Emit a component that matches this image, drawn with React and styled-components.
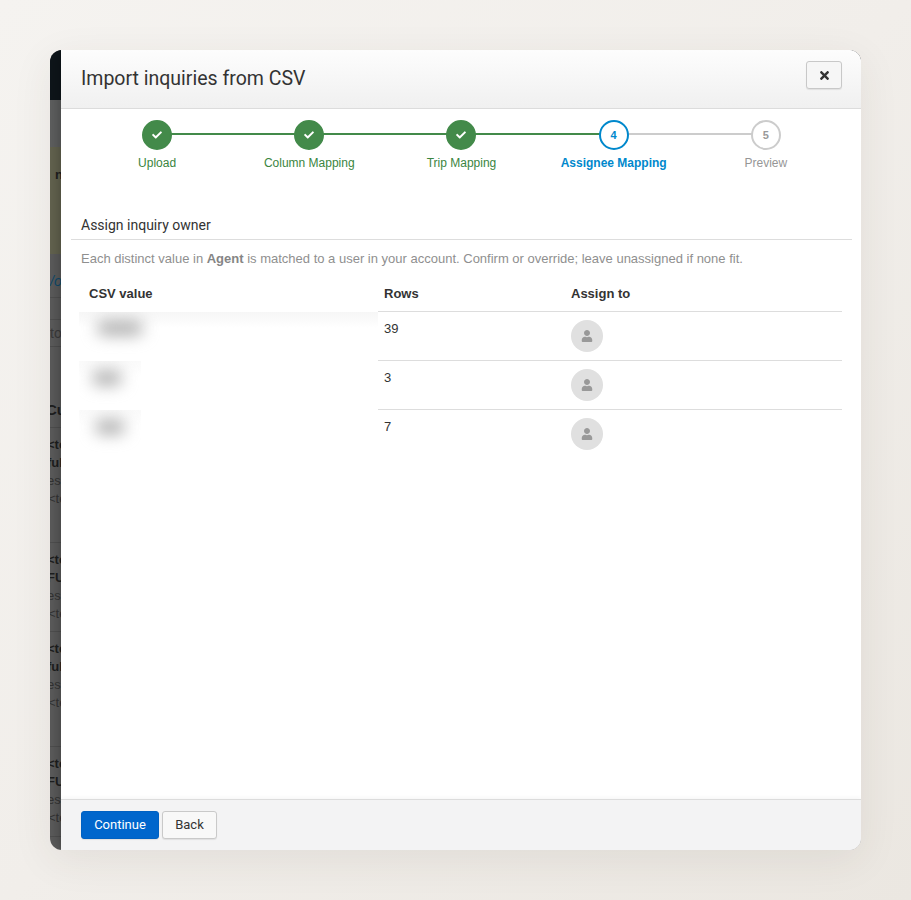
import React from "react";
import styled, { createGlobalStyle } from "styled-components";
import { FaCheck, FaTimes, FaUser } from "react-icons/fa";

const Global = createGlobalStyle`
  html, body { margin: 0; padding: 0; height: 100%; }
  body {
    width: 911px; height: 900px; overflow: hidden;
    background: linear-gradient(135deg, #f5f3f0 0%, #f1eeea 50%, #ebe7e1 100%);
    font-family: "Liberation Sans", Arial, sans-serif;
  }
`;

const Stage = styled.div`
  padding: 50px;
`;

const Window = styled.div`
  position: relative;
  width: 811px;
  height: 800px;
  border-radius: 12px;
  overflow: hidden;
  box-shadow: 0 10px 40px rgba(60, 50, 40, 0.08);
`;

const BackApp = styled.div`
  height: 100%;
  background: #5b5b5b;
  display: flex;
  flex-direction: column;
  font-size: 13px;
  line-height: 18px;
  color: #1e1e1e;
  white-space: nowrap;
`;

const NavBar = styled.div`
  height: 50px;
  background: #0e151a;
`;
const SubBar = styled.div`
  height: 47px;
  background: #5e5f5f;
`;
const Banner = styled.div`
  height: 107px;
  background: #63634f;
  padding: 19px 0 0 5px;
  box-sizing: border-box;
  font-weight: 700;
`;
const Tabs = styled.div`
  height: 44px;
  box-sizing: border-box;
  padding-top: 18px;
  border-bottom: 1px solid #505050;
  color: #0f4a6b;
  font-style: italic;
  font-size: 14px;
`;
const Search = styled.div`
  height: 28px;
  box-sizing: border-box;
  margin-top: 21px;
  border-top: 1px solid #505050;
  border-bottom: 1px solid #4e4e4e;
  color: #3a3a3a;
  font-size: 14px;
  line-height: 26px;
`;
const Heading = styled.div`
  margin-top: 54px;
  height: 26px;
  font-weight: 700;
  font-size: 15px;
  margin-left: -4px;
`;
const Card = styled.div`
  height: ${(p) => p.$h}px;
  box-sizing: border-box;
  padding-top: 8px;
  border-top: 1px solid #4f4f4f;
`;
const CardTag = styled.div`
  font-weight: 700;
  margin-left: -3px;
`;
const CardName = styled.div`
  font-weight: 700;
  margin-left: -3px;
`;
const CardMeta = styled.div`
  color: #333;
  margin-left: -3px;
`;
const CardFoot = styled.div`
  color: #333;
  margin-left: -2px;
`;

const Modal = styled.div`
  position: absolute;
  top: 0;
  left: 11px;
  right: 0;
  bottom: 0;
  display: flex;
  flex-direction: column;
  background: #fff;
  box-shadow: 0 0 14px rgba(0, 0, 0, 0.35);
`;

const Header = styled.div`
  height: 59px;
  box-sizing: border-box;
  flex: none;
  display: flex;
  align-items: center;
  justify-content: space-between;
  padding: 0 19px 0 20px;
  background: linear-gradient(#fdfdfd, #f0f0f0);
  border-bottom: 1px solid #dcdcdc;
`;
const Title = styled.h1`
  margin: 0;
  font: 400 19.5px/28px Roboto, sans-serif;
  color: #333;
`;
const CloseButton = styled.button`
  align-self: flex-start;
  width: 36px;
  height: 28px;
  margin-top: 11px;
  padding: 0;
  display: flex;
  align-items: center;
  justify-content: center;
  background: #f6f6f6;
  border: 1px solid #c8c8c8;
  border-radius: 3px;
  color: #333;
  font-size: 13px;
  box-shadow: 0 1px 1px rgba(0, 0, 0, 0.08);
`;

const Body = styled.div`
  flex: 1;
  min-height: 0;
  padding: 11px 9px 0 10px;
`;

const Stepper = styled.div`
  display: grid;
  grid-template-columns: repeat(5, 152.2px);
  padding: 0 0 0 10px;
  margin-bottom: 45px;
`;
const Step = styled.div`
  position: relative;
  display: flex;
  flex-direction: column;
  align-items: center;
  font-size: 12px;
  line-height: 14px;
  color: ${(p) => p.$color};
  font-weight: ${(p) => (p.$active ? 700 : 400)};
`;
const Connector = styled.span`
  position: absolute;
  top: 13px;
  left: 50%;
  width: 100%;
  height: 2px;
  background: ${(p) => p.$color};
`;
const Circle = styled.span`
  position: relative;
  z-index: 1;
  width: 30px;
  height: 30px;
  box-sizing: border-box;
  border-radius: 50%;
  display: flex;
  align-items: center;
  justify-content: center;
  margin-bottom: 6px;
  background: ${(p) => (p.$done ? "#438a4a" : "#fff")};
  border: 2px solid ${(p) => p.$color};
  color: ${(p) => (p.$done ? "#fff" : p.$color === "#ccc" ? "#999" : p.$color)};
  font-size: 11px;
  font-weight: 700;
`;

const SectionTitle = styled.h2`
  margin: 0;
  padding: 0 0 4px 10px;
  font: 400 14px/20px Roboto, sans-serif;
  color: #333;
  border-bottom: 1px solid #ddd;
`;
const Description = styled.p`
  margin: 11px 0 0 10px;
  font-size: 13px;
  line-height: 16px;
  color: #8f8f8f;
  b { color: #858585; }
`;

const Table = styled.div`
  margin: 17px 0 0 8px;
  width: 763px;
  display: grid;
  grid-template-columns: 299px 187px 277px;
  font-size: 13px;
  color: #333;
`;
const HeadCell = styled.div`
  height: 28px;
  padding-left: ${(p) => p.$pad}px;
  font-weight: 700;
  line-height: 18px;
  padding-top: 1px;
  box-sizing: border-box;
  border-bottom: ${(p) => (p.$plain ? "0" : "1px solid #ddd")};
`;
const HiddenCell = styled.div`
  height: 49px;
  overflow: hidden;
  background: linear-gradient(${(p) => (p.$first ? "#f6f6f6" : "#fafafa")}, #fff 16px);
  width: ${(p) => p.$cover}px;
`;
const Smudge = styled.div`
  width: ${(p) => p.$w}px;
  height: 14px;
  margin: ${(p) => p.$y}px 0 0 ${(p) => p.$x}px;
  background: #aaa;
  border-radius: 7px;
  filter: blur(8px);
`;
const CountCell = styled.div`
  height: 49px;
  box-sizing: border-box;
  padding: 9px 0 0 6px;
  line-height: 16px;
  border-bottom: ${(p) => (p.$last ? "0" : "1px solid #ddd")};
`;
const AssignCell = styled.div`
  height: 49px;
  box-sizing: border-box;
  padding: 8px 0 0 6px;
  border-bottom: ${(p) => (p.$last ? "0" : "1px solid #ddd")};
`;
const Avatar = styled.span`
  width: 32px;
  height: 32px;
  border-radius: 50%;
  background: #e0e0e0;
  color: #999;
  font-size: 12px;
  display: flex;
  align-items: center;
  justify-content: center;
`;

const Footer = styled.div`
  height: 51px;
  flex: none;
  box-sizing: border-box;
  display: flex;
  align-items: flex-start;
  gap: 3px;
  padding: 11px 20px 0;
  background: #f3f3f4;
  border-top: 1px solid #dcdcdc;
  box-shadow: 0 -2px 4px rgba(0, 0, 0, 0.03);
`;
const Button = styled.button`
  height: 28px;
  width: ${(p) => p.$w}px;
  padding: 0 0 1px;
  font: 400 13px Roboto, sans-serif;
  border-radius: 3px;
  border: 1px solid ${(p) => (p.$primary ? "#0061c2" : "#c9c9c9")};
  background: ${(p) => (p.$primary ? "#0066cc" : "#f8f8f8")};
  color: ${(p) => (p.$primary ? "#fff" : "#333")};
  box-shadow: 0 1px 1px rgba(0, 0, 0, 0.08);
`;

const GREEN = "#438a4a";
const GREEN_TEXT = "#3a8540";
const BLUE = "#0088cc";
const GREY = "#ccc";

const steps = [
  { label: "Upload", state: "done" },
  { label: "Column Mapping", state: "done" },
  { label: "Trip Mapping", state: "done" },
  { label: "Assignee Mapping", state: "active", n: 4 },
  { label: "Preview", state: "todo", n: 5 },
];

const rows = [
  { count: 39, w: 46, x: 18, y: 9, cover: 299 },
  { count: 3, w: 30, x: 13, y: 10, cover: 62 },
  { count: 7, w: 30, x: 16, y: 10, cover: 62 },
];

const bgCards = [
  { h: 115, name: "ful" },
  { h: 89, name: "FU" },
  { h: 115, name: "ful" },
  { h: 90, name: "FU" },
];

export default function App() {
  return (
    <Stage>
      <Global />
      <Window>
        <BackApp>
          <NavBar />
          <SubBar />
          <Banner>n</Banner>
          <Tabs>/o</Tabs>
          <Search>to</Search>
          <Heading>Cu</Heading>
          {bgCards.map((c, i) => (
            <Card key={i} $h={c.h}>
              <CardTag>&lt;te</CardTag>
              <CardName>{c.name}</CardName>
              <CardMeta>es</CardMeta>
              <CardFoot>&lt;te</CardFoot>
            </Card>
          ))}
          <Card $h={14} />
        </BackApp>

        <Modal>
          <Header>
            <Title>Import inquiries from CSV</Title>
            <CloseButton aria-label="Close"><FaTimes /></CloseButton>
          </Header>
          <Body>
            <Stepper>
              {steps.map((s, i) => {
                const color = s.state === "done" ? GREEN : s.state === "active" ? BLUE : GREY;
                const text = s.state === "done" ? GREEN_TEXT : s.state === "active" ? BLUE : "#969696";
                return (
                  <Step key={s.label} $color={text} $active={s.state === "active"}>
                    {i < steps.length - 1 && (
                      <Connector $color={s.state === "done" ? GREEN : GREY} />
                    )}
                    <Circle $done={s.state === "done"} $color={color}>
                      {s.state === "done" ? <FaCheck size={10} /> : s.n}
                    </Circle>
                    {s.label}
                  </Step>
                );
              })}
            </Stepper>
            <SectionTitle>Assign inquiry owner</SectionTitle>
            <Description>
              Each distinct value in <b>Agent</b> is matched to a user in your account. Confirm or override; leave unassigned if none fit.
            </Description>
            <Table>
              <HeadCell $pad={10} $plain>CSV value</HeadCell>
              <HeadCell $pad={6}>Rows</HeadCell>
              <HeadCell $pad={6}>Assign to</HeadCell>
              {rows.map((r, i) => (
                <React.Fragment key={i}>
                  <HiddenCell $first={i === 0} $cover={r.cover}>
                    <Smudge $w={r.w} $x={r.x} $y={r.y} />
                  </HiddenCell>
                  <CountCell $last={i === rows.length - 1}>{r.count}</CountCell>
                  <AssignCell $last={i === rows.length - 1}>
                    <Avatar><FaUser /></Avatar>
                  </AssignCell>
                </React.Fragment>
              ))}
            </Table>
          </Body>
          <Footer>
            <Button $primary $w={78}>Continue</Button>
            <Button $w={55}>Back</Button>
          </Footer>
        </Modal>
      </Window>
    </Stage>
  );
}
